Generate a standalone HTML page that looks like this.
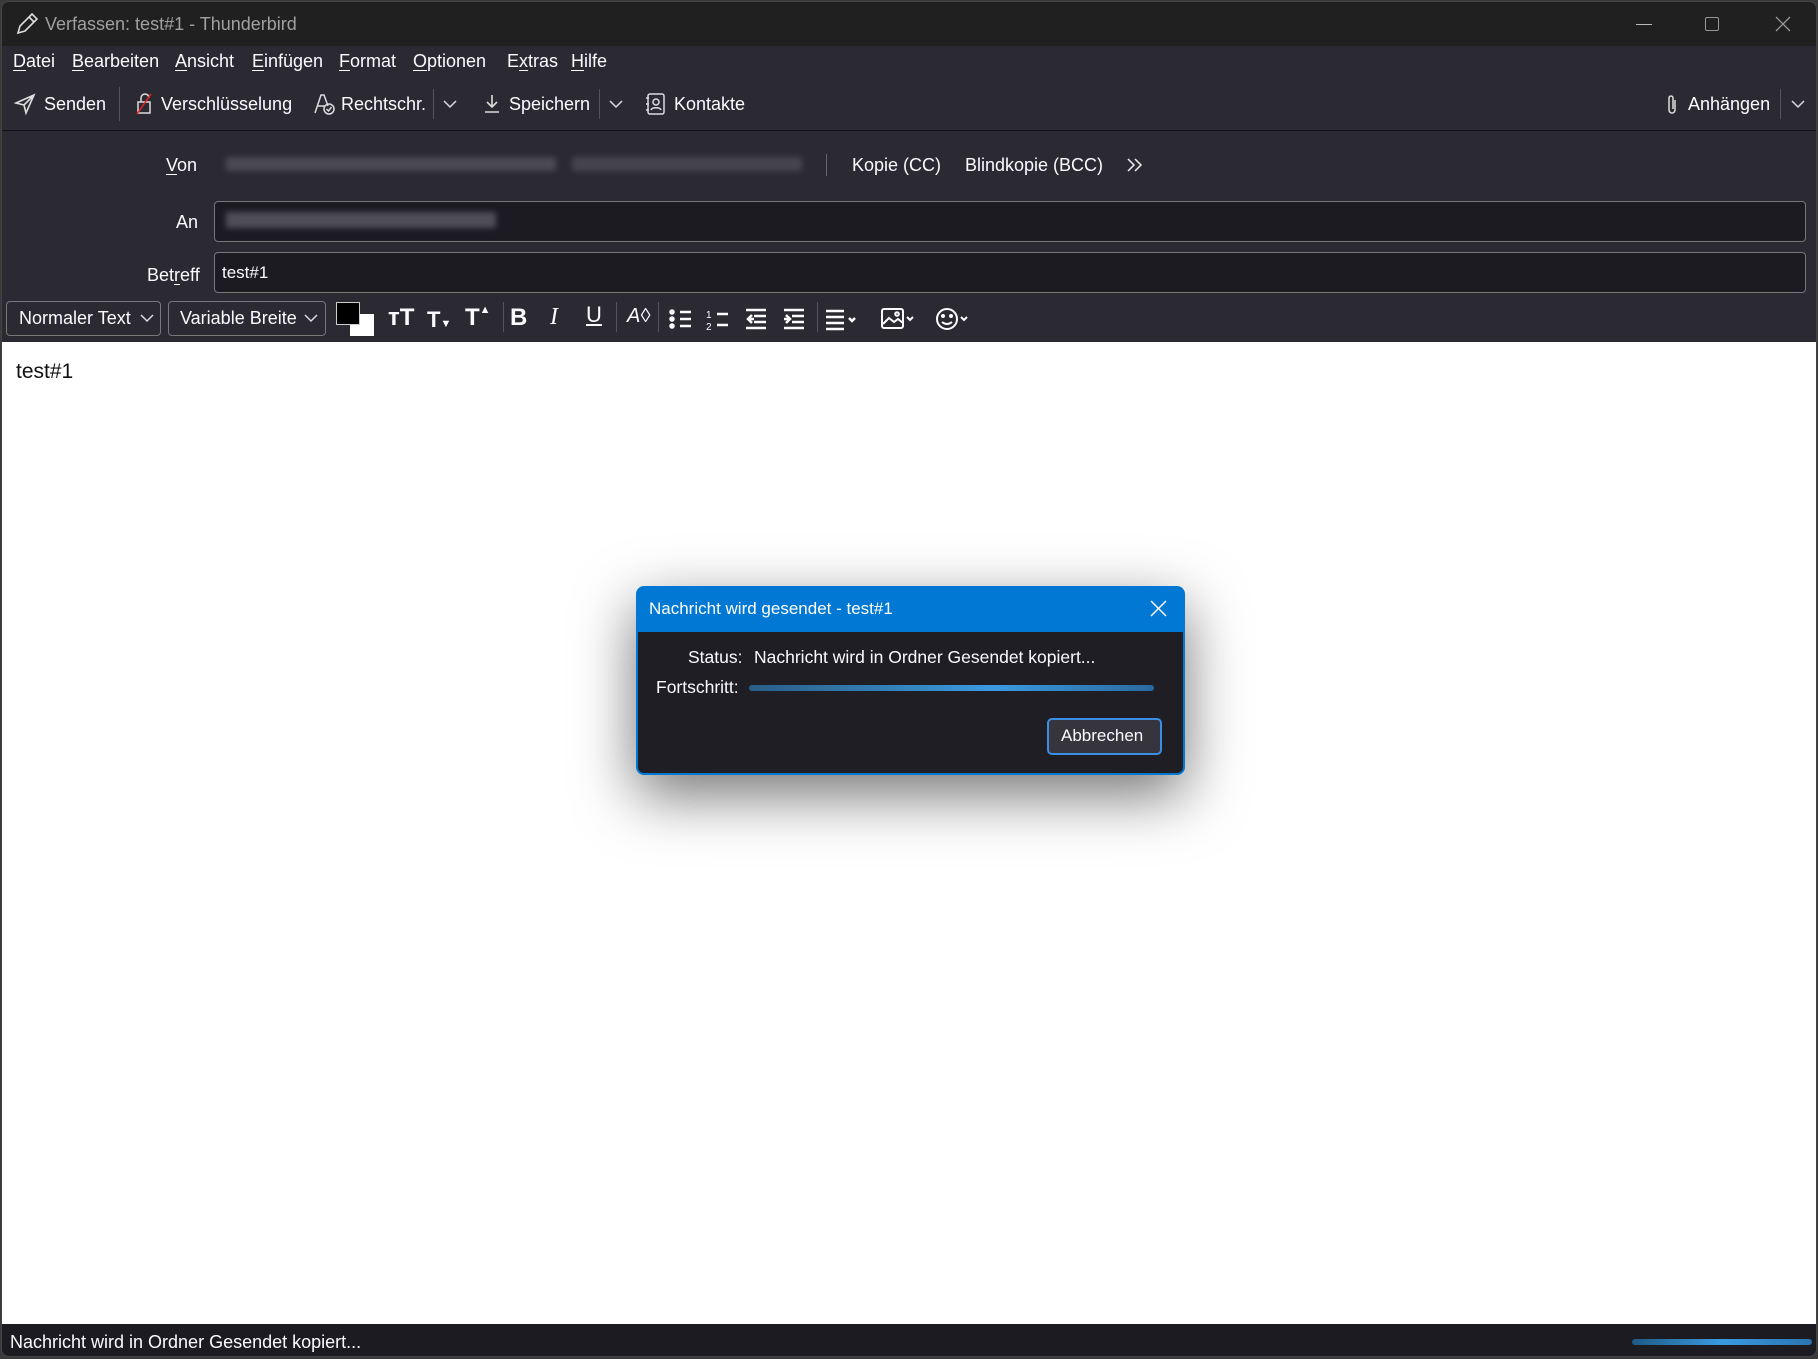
<!DOCTYPE html>
<html><head><meta charset="utf-8"><style>
*{box-sizing:border-box;margin:0;padding:0}
body{width:1818px;height:1359px;background:#3a3a3a;font-family:"Liberation Sans",sans-serif;position:relative;overflow:hidden;color:#fbfbfe}
.a{position:absolute;white-space:nowrap}
#win{position:absolute;left:1px;top:1px;width:1816px;height:1356px;background:#2b2a33;border-radius:8px;overflow:hidden;border:1px solid #444}
.t{font-size:18px}
u{text-decoration:underline;text-underline-offset:3px}
svg{position:absolute}
</style></head><body>
<div id="win">
<div class="a" style="left:0;top:0;width:1816px;height:44px;background:#202020"></div>
<svg style="left:12px;top:9px" width="26" height="26" viewBox="0 0 26 26" fill="none" stroke="#ddd" stroke-width="1.6"><path d="M4 22 L6 15 L18 3 L23 8 L11 20 Z M15 6 L20 11"/></svg>
<div class="a" style="left:43px;top:12px;font-size:18px;color:#a0a0a0">Verfassen: test#1 - Thunderbird</div>
<div class="a" style="left:1634px;top:22px;width:16px;height:1px;background:#bbb"></div>
<div class="a" style="left:1703px;top:15px;width:14px;height:14px;border:1.3px solid #999;border-radius:2px"></div>
<svg style="left:1773px;top:14px" width="16" height="16"><path d="M1 1L15 15M15 1L1 15" stroke="#999" stroke-width="1.3"/></svg>

<div class="a t" style="left:11px;top:49px"><u>D</u>atei</div>
<div class="a t" style="left:70px;top:49px"><u>B</u>earbeiten</div>
<div class="a t" style="left:173px;top:49px"><u>A</u>nsicht</div>
<div class="a t" style="left:250px;top:49px"><u>E</u>infügen</div>
<div class="a t" style="left:337px;top:49px"><u>F</u>ormat</div>
<div class="a t" style="left:411px;top:49px"><u>O</u>ptionen</div>
<div class="a t" style="left:505px;top:49px">E<u>x</u>tras</div>
<div class="a t" style="left:569px;top:49px"><u>H</u>ilfe</div>

<svg style="left:12px;top:91px" width="22" height="22" viewBox="0 0 22 22" fill="none" stroke="#ddd" stroke-width="1.6"><path d="M2 10 L20 2 L12 20 L10 12 Z M10 12 L20 2"/></svg>
<div class="a t" style="left:42px;top:92px">Senden</div>
<div class="a" style="left:117px;top:85px;width:1px;height:34px;background:#555"></div>
<svg style="left:132px;top:90px" width="22" height="24" viewBox="0 0 22 24" fill="none" stroke="#ddd" stroke-width="1.5"><rect x="4" y="10" width="12" height="11"/><path d="M7 10V6a4 4 0 0 1 8 0"/><path d="M3 22L17 2" stroke="#e22"/></svg>
<div class="a t" style="left:159px;top:92px">Verschlüsselung</div>
<svg style="left:311px;top:90px" width="24" height="24" viewBox="0 0 24 24" fill="none" stroke="#ddd" stroke-width="1.5"><path d="M2 21L8 3h3l4 11M5 14h7"/><circle cx="16" cy="17" r="5"/><path d="M13.5 17l2 2 3-4"/></svg>
<div class="a t" style="left:339px;top:92px">Rechtschr.</div>
<div class="a" style="left:431px;top:87px;width:1px;height:30px;background:#555"></div>
<svg style="left:440px;top:96px" width="16" height="12"><path d="M2 3l6 6 6-6" stroke="#ddd" stroke-width="1.5" fill="none"/></svg>
<svg style="left:480px;top:91px" width="20" height="22" viewBox="0 0 20 22" fill="none" stroke="#ddd" stroke-width="1.6"><path d="M10 2v12M5 9l5 5 5-5M3 19h14"/></svg>
<div class="a t" style="left:507px;top:92px">Speichern</div>
<div class="a" style="left:597px;top:87px;width:1px;height:30px;background:#555"></div>
<svg style="left:606px;top:96px" width="16" height="12"><path d="M2 3l6 6 6-6" stroke="#ddd" stroke-width="1.5" fill="none"/></svg>
<svg style="left:643px;top:90px" width="22" height="24" viewBox="0 0 22 24" fill="none" stroke="#ddd" stroke-width="1.5"><rect x="3" y="2" width="16" height="20" rx="2"/><circle cx="11" cy="10" r="3"/><path d="M6 18c1-3 9-3 10 0M1 6h3M1 12h3M1 18h3"/></svg>
<div class="a t" style="left:672px;top:92px">Kontakte</div>
<svg style="left:1662px;top:91px" width="16" height="24" viewBox="0 0 16 24" fill="none" stroke="#ddd" stroke-width="1.5"><path d="M11 7v10a3 3 0 0 1-6 0V5a2 2 0 0 1 4 0v11"/></svg>
<div class="a t" style="left:1686px;top:92px">Anhängen</div>
<div class="a" style="left:1778px;top:87px;width:1px;height:30px;background:#555"></div>
<svg style="left:1788px;top:96px" width="16" height="12"><path d="M2 3l6 6 6-6" stroke="#ddd" stroke-width="1.5" fill="none"/></svg>
<div class="a" style="left:0;top:128px;width:1816px;height:1px;background:#111"></div>

<div class="a t" style="left:164px;top:153px"><u>V</u>on</div>
<div class="a" style="left:224px;top:155px;width:330px;height:14px;background:#4a4954;filter:blur(3px)"></div>
<div class="a" style="left:570px;top:155px;width:230px;height:14px;background:#46454f;filter:blur(3px)"></div>
<div class="a" style="left:824px;top:152px;width:1px;height:22px;background:#666"></div>
<div class="a t" style="left:850px;top:153px">Kopie (CC)</div>
<div class="a t" style="left:963px;top:153px">Blindkopie (BCC)</div>
<svg style="left:1124px;top:155px" width="18" height="16"><path d="M2 2l6 6-6 6M9 2l6 6-6 6" stroke="#eee" stroke-width="1.5" fill="none"/></svg>

<div class="a t" style="left:174px;top:210px">An</div>
<div class="a" style="left:212px;top:199px;width:1592px;height:41px;background:#1c1b22;border:1px solid #777;border-radius:4px"></div>
<div class="a" style="left:224px;top:210px;width:270px;height:16px;background:#4f4e58;filter:blur(3px)"></div>
<div class="a t" style="left:145px;top:263px">Bet<u>r</u>eff</div>
<div class="a" style="left:212px;top:250px;width:1592px;height:41px;background:#1c1b22;border:1px solid #777;border-radius:4px"></div>
<div class="a" style="left:220px;top:261px;font-size:17px">test#1</div>

<div class="a" style="left:4px;top:299px;width:155px;height:35px;border:1px solid #777;border-radius:4px;background:#2b2a33"></div>
<div class="a t" style="left:17px;top:306px">Normaler Text</div>
<svg style="left:137px;top:310px" width="16" height="12"><path d="M2 3l6 6 6-6" stroke="#ddd" stroke-width="1.5" fill="none"/></svg>
<div class="a" style="left:166px;top:299px;width:158px;height:35px;border:1px solid #777;border-radius:4px;background:#2b2a33"></div>
<div class="a t" style="left:178px;top:306px">Variable Breite</div>
<svg style="left:301px;top:310px" width="16" height="12"><path d="M2 3l6 6 6-6" stroke="#ddd" stroke-width="1.5" fill="none"/></svg>
<div class="a" style="left:348px;top:312px;width:24px;height:22px;background:#fff"></div>
<div class="a" style="left:334px;top:300px;width:24px;height:23px;background:#000;border:1px solid #ccc"></div>
<div class="a" style="left:386px;top:302px;font-size:24px;font-weight:bold">ᴛT</div>
<div class="a" style="left:425px;top:305px;font-size:22px;font-weight:bold">T<span style="font-size:11px">▼</span></div>
<div class="a" style="left:463px;top:302px;font-size:24px;font-weight:bold">T<span style="font-size:11px;vertical-align:top">▲</span></div>
<div class="a" style="left:501px;top:300px;width:1px;height:30px;background:#555"></div>
<div class="a" style="left:508px;top:302px;font-size:24px;font-weight:bold">B</div>
<div class="a" style="left:548px;top:302px;font-size:24px;font-style:italic;font-family:'Liberation Serif',serif">I</div>
<div class="a" style="left:584px;top:300px;font-size:22px;text-decoration:underline">U</div>
<div class="a" style="left:614px;top:300px;width:1px;height:30px;background:#555"></div>
<div class="a" style="left:625px;top:303px;font-size:20px;font-style:italic">A◊</div>
<div class="a" style="left:656px;top:300px;width:1px;height:30px;background:#555"></div>
<svg style="left:666px;top:303px" width="210" height="28" fill="none" stroke="#fbfbfe" stroke-width="2.5">
<path d="M12 7h11M12 14h11M12 21h11"/><circle cx="4" cy="7" r="1.5" fill="#fff"/><circle cx="4" cy="14" r="1.5" fill="#fff"/><circle cx="4" cy="21" r="1.5" fill="#fff"/>
<path d="M49 9h11M49 20h11"/><text x="38" y="13" font-size="10" fill="#fff" stroke="none">1</text><text x="38" y="25" font-size="10" fill="#fff" stroke="none">2</text>
<path d="M78 5h20M86 11h12M86 17h12M78 23h20M84 10l-4 4 4 4M80 14h6"/>
<path d="M116 5h20M124 11h12M124 17h12M116 23h20M118 10l4 4-4 4M116 14h6"/>
<path d="M158 6h18M158 12h18M158 18h18M158 24h18M181 13l3 3 3-3"/>
</svg>
<div class="a" style="left:815px;top:300px;width:1px;height:30px;background:#555"></div>
<svg style="left:878px;top:303px" width="110" height="28" fill="none" stroke="#fbfbfe" stroke-width="2">
<rect x="2" y="4" width="21" height="19" rx="2"/><path d="M3 19l6-6 5 4 4-3 5 4"/><circle cx="17" cy="9" r="1.8"/><path d="M27 12l3 3 3-3"/>
<circle cx="67" cy="14" r="10"/><circle cx="63" cy="11" r="1" fill="#fff"/><circle cx="71" cy="11" r="1" fill="#fff"/><path d="M62 17q5 4 10 0M81 12l3 3 3-3"/>
</svg>

<div class="a" style="left:0;top:340px;width:1816px;height:982px;background:#fff"></div>
<div class="a" style="left:14px;top:358px;font-size:21px;color:#111">test#1</div>

<div class="a" style="left:0;top:1322px;width:1816px;height:34px;background:#1c1b22"></div>
<div class="a" style="left:8px;top:1330px;font-size:18px">Nachricht wird in Ordner Gesendet kopiert...</div>
<div class="a" style="left:1630px;top:1337px;width:180px;height:6px;border-radius:3px;background:linear-gradient(90deg,#1e5a86,#3a9ae0,#2a74b0)"></div>

<div class="a" style="left:634px;top:584px;width:549px;height:189px;border-radius:8px;background:#1f1e25;border:2px solid #0078d4;box-shadow:0 20px 60px rgba(0,0,0,.55);overflow:hidden">
<div style="height:44px;background:#0078d4"></div>
</div>
<div class="a" style="left:647px;top:597px;font-size:17px;color:#fff">Nachricht wird gesendet - test#1</div>
<svg style="left:1148px;top:598px" width="17" height="17"><path d="M1 1L16 16M16 1L1 16" stroke="#fff" stroke-width="1.5"/></svg>
<div class="a" style="left:686px;top:645px;font-size:17.5px">Status:</div>
<div class="a" style="left:752px;top:645px;font-size:17.5px">Nachricht wird in Ordner Gesendet kopiert...</div>
<div class="a" style="left:654px;top:675px;font-size:17.5px">Fortschritt:</div>
<div class="a" style="left:747px;top:683px;width:405px;height:6px;border-radius:3px;background:linear-gradient(90deg,#2a5e86,#3a9ae0 60%,#2a6aa0)"></div>
<div class="a" style="left:1045px;top:716px;width:115px;height:37px;border:2px solid #3a8ee6;border-radius:5px;background:#36353d"></div>
<div class="a" style="left:1059px;top:724px;font-size:17px">Abbrechen</div>
</div>
</body></html>
